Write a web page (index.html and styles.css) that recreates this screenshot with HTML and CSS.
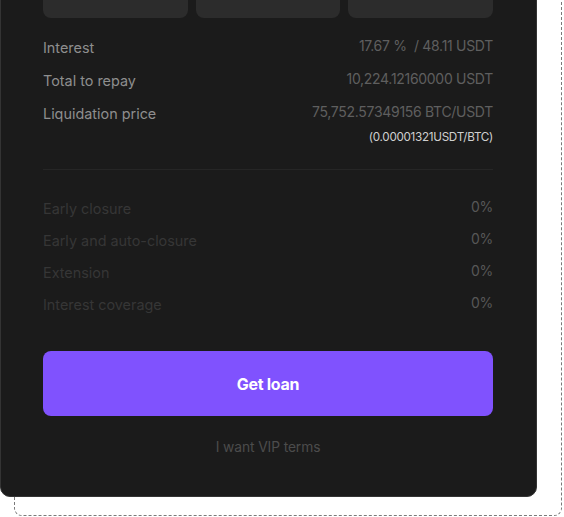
FILE: index.html
```html
<!DOCTYPE html>
<html lang="en">
<head>
  <meta charset="UTF-8">
  <title>Loan summary</title>
  <meta name="viewport" content="width=device-width, initial-scale=1.0">
  <link rel="stylesheet" href="styles.css">
</head>
<body>

  <div class="frame">
    <div class="card">

      <div class="tabs">
        <div class="tab"></div>
        <div class="tab"></div>
        <div class="tab"></div>
      </div>

      <div class="summary">
        <div class="row">
          <span class="label">Interest</span>
          <span class="value">17.67 % &nbsp;/ 48.11 USDT</span>
        </div>
        <div class="row">
          <span class="label">Total to repay</span>
          <span class="value">10,224.12160000 USDT</span>
        </div>
        <div class="row">
          <span class="label">Liquidation price</span>
          <span class="value">75,752.57349156 BTC/USDT</span>
        </div>
        <div class="note">(0.00001321USDT/BTC)</div>
      </div>

      <div class="fees">
        <div class="row">
          <span class="label">Early closure</span>
          <span class="value">0%</span>
        </div>
        <div class="row">
          <span class="label">Early and auto-closure</span>
          <span class="value">0%</span>
        </div>
        <div class="row">
          <span class="label">Extension</span>
          <span class="value">0%</span>
        </div>
        <div class="row">
          <span class="label">Interest coverage</span>
          <span class="value">0%</span>
        </div>
      </div>

      <button class="cta">Get loan</button>
      <div class="vip">I want VIP terms</div>

    </div>
  </div>

</body>
</html>
```

FILE: styles.css
```css
html, body {
  margin: 0;
  padding: 0;
  background: #fff;
  overflow: hidden;
}
body {
  font-family: Inter, "Noto Sans", sans-serif;
  font-size: 14.4px;
}
.frame {
  border: 1px dashed #7a7a7a;
  border-radius: 8px;
  margin: -52px 0 0 14px;
  width: 548px;
  box-sizing: border-box;
  padding: 0 24px 18px 0;
}
.card {
  margin-left: -15px;
  width: 537px;
  box-sizing: border-box;
  background: #1b1b1b;
  border: 1px solid #343434;
  border-radius: 10px;
  padding: 21px 43px 39px 42px;
}
.tabs {
  display: grid;
  grid-template-columns: 1fr 1fr 1fr;
  gap: 8px;
}
.tab {
  height: 47px;
  background: #2c2c2c;
  border-radius: 8px;
}
.summary {
  margin-top: 20px;
  display: flex;
  flex-direction: column;
  gap: 13px;
  padding-bottom: 24px;
  border-bottom: 1px solid #262626;
}
.row {
  display: flex;
  justify-content: space-between;
  align-items: flex-start;
  line-height: 20px;
}
.row .value {
  line-height: 16px;
  font-size: 14px;
  letter-spacing: -0.3px;
}
.summary .label {
  color: #8e8e8e;
}
.summary .value {
  color: #5f5f5f;
}
.note {
  margin-top: -8px;
  text-align: right;
  font-size: 11.7px;
  line-height: 16px;
  letter-spacing: -0.3px;
  color: #cfcfcf;
}
.fees {
  margin-top: 29px;
  display: flex;
  flex-direction: column;
  gap: 12px;
}
.fees .label {
  color: #363636;
}
.fees .value {
  color: #575757;
}
.cta {
  display: block;
  width: 100%;
  height: 65px;
  margin-top: 36px;
  border: 0;
  border-radius: 8px;
  background: #8052fe;
  color: #fff;
  font-family: inherit;
  font-size: 16px;
  font-weight: 700;
  letter-spacing: -0.3px;
  padding-top: 2px;
  cursor: pointer;
}
.vip {
  margin-top: 21px;
  text-align: center;
  line-height: 20px;
  font-size: 13.8px;
  letter-spacing: -0.1px;
  color: #4c4c4c;
}
```
